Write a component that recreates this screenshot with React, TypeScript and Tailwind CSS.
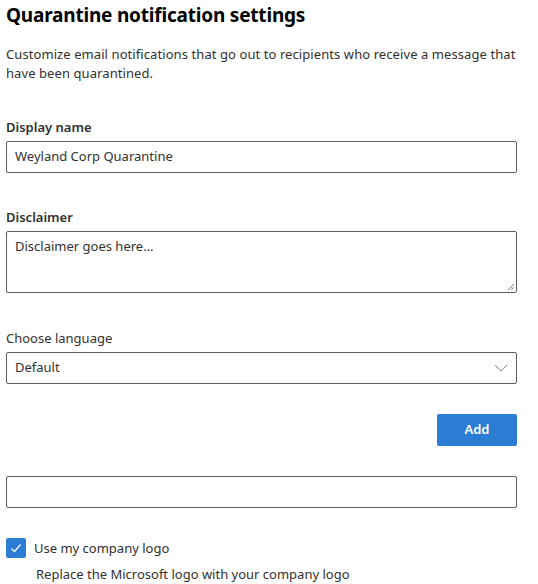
import React from "react";

export default function App() {
  return (
    <div className="bg-white w-[538px] h-[584px] overflow-hidden text-[#323130]">
      <div className="pl-[6px] w-[517px] font-['Noto_Sans',sans-serif]">
        <h1 className="text-[19px] leading-[26px] font-bold text-[#000] pt-[2px] tracking-[-0.2px]">
          Quarantine notification settings
        </h1>
        <p className="mt-[17px] text-[13px] leading-[19px] text-[#323130] w-[515px] tracking-[0.08px]">
          Customize email notifications that go out to recipients who receive a message that have been quarantined.
        </p>

        <label className="block mt-[35px] text-[13px] leading-[18px] font-semibold text-[#323130]">
          Display name
        </label>
        <div className="mt-[5px] h-[32px] border border-[#605e5c] rounded-[2px] flex items-center px-[8px] text-[13px]">
          Weyland Corp Quarantine
        </div>

        <label className="block mt-[35px] text-[13px] leading-[18px] font-semibold text-[#323130]">
          Disclaimer
        </label>
        <div className="relative mt-[5px] h-[62px] border border-[#605e5c] rounded-[2px] px-[8px] pt-[5px] text-[13px] leading-[18px]">
          Disclaimer goes here...
          <svg className="absolute right-[1px] bottom-[1px]" width="9" height="9" viewBox="0 0 9 9">
            <path d="M8 2 L2 8 M8 5 L5 8" stroke="#888" strokeWidth="1" />
          </svg>
        </div>

        <label className="block mt-[36px] text-[13px] leading-[18px] text-[#323130]">
          Choose language
        </label>
        <div className="mt-[5px] h-[32px] border border-[#605e5c] rounded-[2px] flex items-center justify-between pl-[8px] pr-[8px] text-[13px]">
          <span>Default</span>
          <svg width="14" height="8" viewBox="0 0 14 8">
            <path d="M1 1 L7 7 L13 1" fill="none" stroke="#8a8886" strokeWidth="1" />
          </svg>
        </div>

        <div className="flex justify-end mt-[30px]">
          <button className="w-[80px] h-[32px] bg-[#2b7cd3] rounded-[2px] text-white text-[13px] font-semibold">
            Add
          </button>
        </div>

        <div className="mt-[30px] h-[32px] border border-[#605e5c] rounded-[2px]" />

        <div className="mt-[30px] flex items-center gap-[8px]">
          <div className="w-[20px] h-[20px] rounded-[2px] bg-[#2b7cd3] flex items-center justify-center">
            <svg width="12" height="10" viewBox="0 0 12 10">
              <path d="M1.5 5.5 L4.5 8.5 L10.5 1.5" fill="none" stroke="white" strokeWidth="1.2" />
            </svg>
          </div>
          <span className="text-[13px] leading-[18px]">Use my company logo</span>
        </div>
        <div className="mt-[7px] pl-[30px] text-[13px] leading-[18px]">
          Replace the Microsoft logo with your company logo
        </div>
      </div>
    </div>
  );
}
